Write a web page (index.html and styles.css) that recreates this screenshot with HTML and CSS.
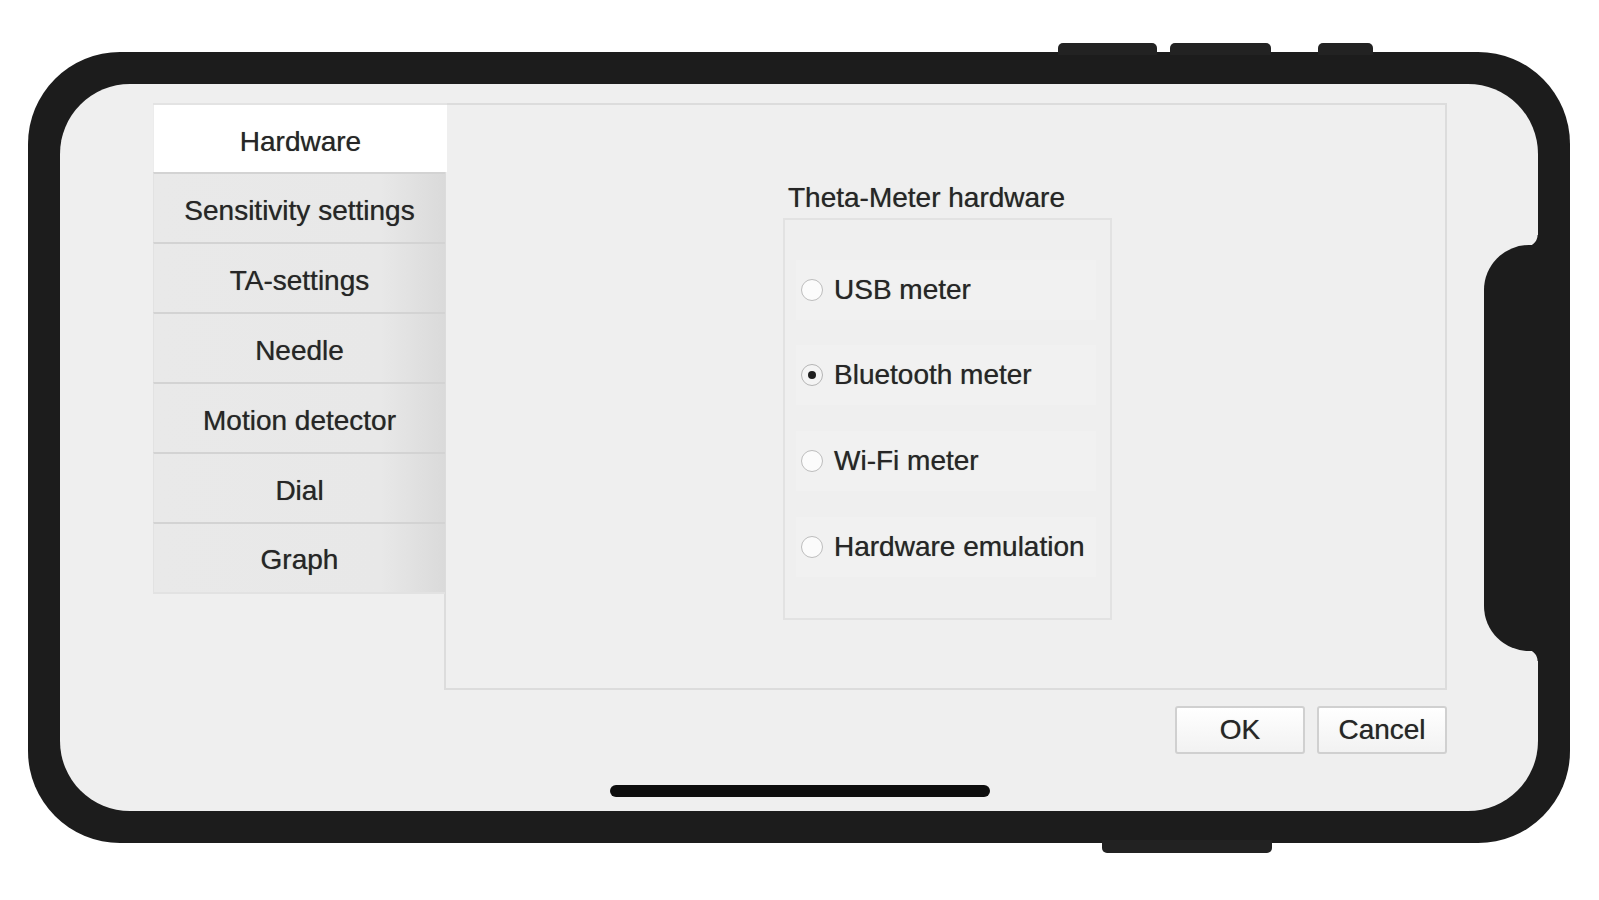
FILE: index.html
```html
<!DOCTYPE html>
<html lang="en">
<head>
<meta charset="utf-8">
<title>Settings</title>
<link rel="stylesheet" href="styles.css">
</head>
<body>
<div class="phone">
  <div class="side-btn side-btn-1"></div>
  <div class="side-btn side-btn-2"></div>
  <div class="side-btn side-btn-3"></div>
  <div class="bottom-btn"></div>
  <div class="screen">
    <div class="dialog">
      <div class="tabwidget">
        <div class="tabbar">
          <div class="tab selected">Hardware</div>
          <div class="tab">Sensitivity settings</div>
          <div class="tab">TA-settings</div>
          <div class="tab">Needle</div>
          <div class="tab">Motion detector</div>
          <div class="tab">Dial</div>
          <div class="tab">Graph</div>
        </div>
        <div class="pane">
          <div class="group">
            <div class="group-title">Theta-Meter hardware</div>
            <div class="group-box">
              <div class="radio-row"><span class="radio"></span><span>USB meter</span></div>
              <div class="radio-row"><span class="radio checked"></span><span>Bluetooth meter</span></div>
              <div class="radio-row"><span class="radio"></span><span>Wi-Fi meter</span></div>
              <div class="radio-row"><span class="radio"></span><span>Hardware emulation</span></div>
            </div>
          </div>
        </div>
      </div>
      <div class="buttons">
        <div class="btn">OK</div>
        <div class="btn">Cancel</div>
      </div>
    </div>
  </div>
  <div class="notch"></div>
  <div class="home-indicator"></div>
</div>
</body>
</html>
```
FILE: styles.css
```css
html, body {
  margin: 0;
  padding: 0;
  background: #ffffff;
}
body {
  font-family: "Liberation Sans", Arial, sans-serif;
  color: #262626;
  width: 1599px;
  height: 900px;
  overflow: hidden;
}
.phone {
  position: relative;
  margin: 52px 0 0 28px;
  width: 1542px;
  height: 791px;
  box-sizing: border-box;
  padding: 32px;
  background: #1c1c1c;
  border-radius: 92px;
}
.side-btn {
  position: absolute;
  top: -9px;
  height: 12px;
  background: #222222;
  border-radius: 5px 5px 0 0;
}
.side-btn-1 { left: 1030px; width: 99px; }
.side-btn-2 { left: 1142px; width: 101px; }
.side-btn-3 { left: 1290px; width: 55px; }
.bottom-btn {
  position: absolute;
  left: 1074px;
  top: 788px;
  width: 170px;
  height: 13px;
  background: #222222;
  border-radius: 0 0 5px 5px;
}
.screen {
  height: 100%;
  background: #efefef;
  border-radius: 70px;
  overflow: hidden;
}
.notch {
  position: absolute;
  left: 1456px;
  top: 193px;
  width: 58px;
  height: 406px;
  background: #1c1c1c;
  border-radius: 45px 0 0 45px;
}
.notch::before,
.notch::after {
  content: "";
  position: absolute;
  right: 4px;
  width: 12px;
  height: 12px;
}
.notch::before {
  top: -10px;
  background: radial-gradient(circle at 0 0, transparent 11px, #1c1c1c 12px);
}
.notch::after {
  bottom: -10px;
  background: radial-gradient(circle at 0 100%, transparent 11px, #1c1c1c 12px);
}
.home-indicator {
  position: absolute;
  left: 582px;
  top: 733px;
  width: 380px;
  height: 12px;
  border-radius: 6px;
  background: #0d0d0d;
}
.dialog {
  display: flex;
  flex-direction: column;
  margin: 19px 91px 0 93px;
}
.tabwidget {
  display: flex;
  height: 587px;
}
.tabbar {
  width: 294px;
  display: flex;
  flex-direction: column;
  border-top: 2px solid #e3e3e3;
  position: relative;
  z-index: 1;
  margin-right: -3px;
}
.tab {
  box-sizing: border-box;
  height: 70px;
  padding-top: 6px;
  display: flex;
  align-items: center;
  justify-content: center;
  font-size: 28px;
  color: #262626;
  text-shadow: 0 0 0.7px rgba(0, 0, 0, 0.55);
  background: linear-gradient(to right, #e9e9e9 0%, #e8e8e8 78%, #dadada 100%);
  border-top: 2px solid #d3d3d3;
  border-left: 1px solid #e2e2e2;
  margin-right: 2px;
  flex: none;
}
.tab.selected {
  background: #ffffff;
  border-top: 0;
  height: 67px;
  margin-right: 0;
  border-left: 1px solid #ececec;
}
.tab:last-child {
  border-bottom: 2px solid #e2e2e2;
  height: 72px;
  padding-bottom: 2px;
}
.pane {
  flex: 1;
  border: 2px solid #dcdcdc;
  display: flex;
  align-items: center;
  justify-content: center;
  padding-top: 12px;
}
.group {
  width: 329px;
  margin-left: 4px;
}
.group-title {
  font-size: 28px;
  line-height: 24px;
  margin-bottom: 8px;
  padding-left: 5px;
  color: #262626;
  text-shadow: 0 0 0.7px rgba(0, 0, 0, 0.55);
}
.group-box {
  border: 2px solid #e2e2e2;
  height: 402px;
  box-sizing: border-box;
  padding: 40px 14px 0 11px;
  display: flex;
  flex-direction: column;
  gap: 25.7px;
}
.radio-row {
  height: 60px;
  display: flex;
  align-items: center;
  font-size: 28px;
  color: #262626;
  text-shadow: 0 0 0.7px rgba(0, 0, 0, 0.55);
  background: #f1f1f1;
}
.radio {
  width: 20px;
  height: 20px;
  border: 1.5px solid #bdbdbd;
  border-radius: 50%;
  background: #fbfbfb;
  margin-left: 5px;
  margin-right: 11px;
  flex: none;
  display: flex;
  align-items: center;
  justify-content: center;
}
.radio.checked {
  background: #f4f4f4;
  border-color: #b5b5b5;
}
.radio.checked::after {
  content: "";
  width: 8px;
  height: 8px;
  border-radius: 50%;
  background: #1f1f1f;
}
.buttons {
  display: flex;
  justify-content: flex-end;
  gap: 12px;
  margin-top: 16px;
}
.btn {
  width: 126px;
  height: 44px;
  border: 2px solid #d0d0d0;
  border-radius: 3px;
  background: linear-gradient(to bottom, #ffffff, #f2f2f2);
  display: flex;
  align-items: center;
  justify-content: center;
  font-size: 28px;
  color: #262626;
  text-shadow: 0 0 0.7px rgba(0, 0, 0, 0.55);
}
```
